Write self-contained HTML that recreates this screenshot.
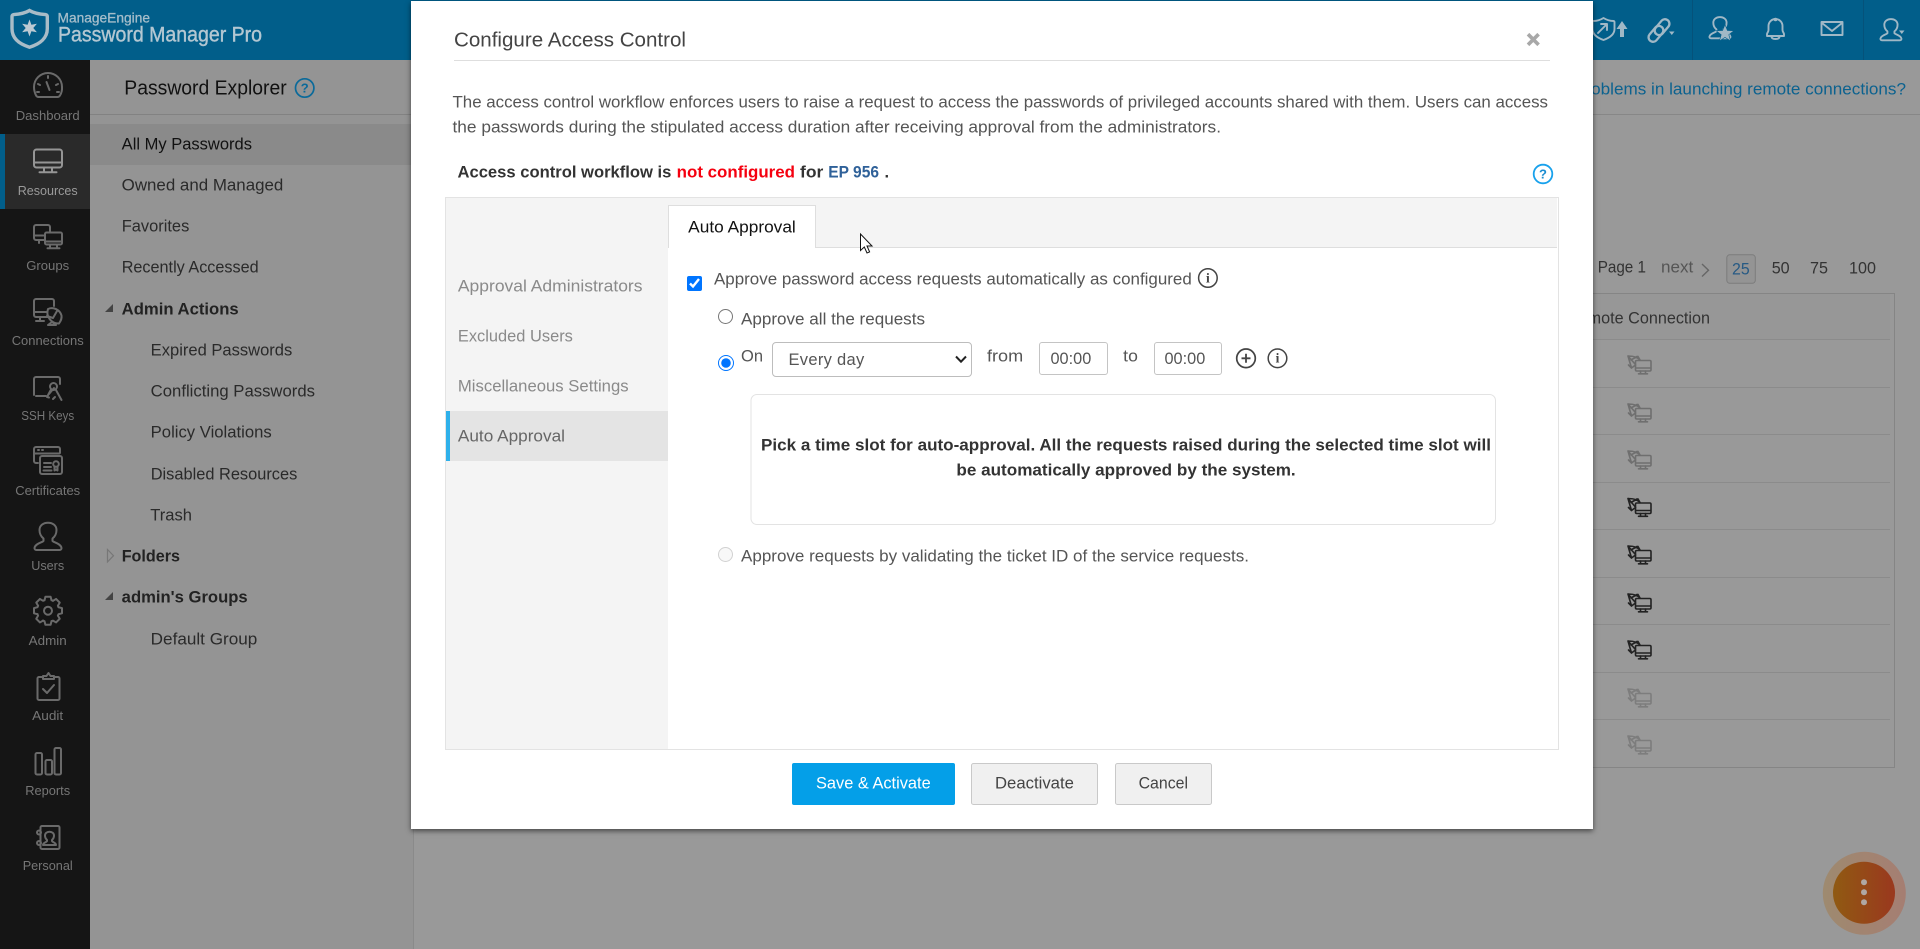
<!DOCTYPE html>
<html lang="en"><head><meta charset="utf-8"><title>Configure Access Control</title>
<style>
html,body{margin:0;padding:0;width:1920px;height:949px;overflow:hidden;background:#999}
*{box-sizing:border-box}
svg{display:block;position:absolute;left:0;top:0}
text{font-family:"Liberation Sans",sans-serif;font-size:16.5px;fill:#333;transform:translateY(-.6px)}
.nav text{font-size:13.2px;fill:#767676;text-anchor:middle;transform:none}
.b{font-weight:700}
.ic{fill:none;stroke:#6a6a6a;stroke-width:2;stroke-linecap:round;stroke-linejoin:round}
.hd{fill:none;stroke:#a0b8c6;stroke-width:1.9;stroke-linecap:round;stroke-linejoin:round}
.mi{fill:none;stroke:#444;stroke-width:1.5}
#modal{position:absolute;left:411px;top:1px;width:1182px;height:828px;background:#fff;box-shadow:0 2px 5px rgba(0,0,0,.55)}
#modal input,#modal select{position:absolute;margin:0;font-family:"Liberation Sans",sans-serif;color:#555}
input[type=text]{height:33px;border:1px solid #c4c4c4;border-radius:3px;background:#fff;font-size:16.3px;outline:0}
select{appearance:none;-webkit-appearance:none;background:transparent;border:1px solid #bdbdbd;border-radius:4px;font-size:16.5px;letter-spacing:.3px;padding:0 0 0 15.5px}
</style></head><body>
<svg width="1920" height="949" viewBox="0 0 1920 949" id="bg">
<defs>
<g id="rc" fill="none" stroke-width="1.6" stroke-linecap="round" stroke-linejoin="round">
<rect x="8.5" y="5.5" width="15.5" height="10.5" rx="1.2"/><path d="M9 13h14.500M13.500 16v2.500M18.500 16v2.500M11.500 18.800h9"/>
<path d="M1 1l3.500 12M1 1.200c4-.3 8 .3 11 3M4.500 13L1.500 10M1 1l7 8M4 5l6-3.500M4.500 13l4-3M13 5l-2-3.500"/>
</g>
<g id="tooth"><path d="M-3.5 -10.5L-2.6 -14H2.6L3.500 -10.5A11 11 0 0 1 4.95 -9.9"/></g>
<path id="usr" d="M43.500 538.500c-2.500-2-4-5-4-8.500 0-4.500 3.800-7.300 8.500-7.300s8.500 2.800 8.500 7.300c0 3.500-1.500 6.500-4 8.500v2.500c0 1 8.500 2.500 9 7 .1 1.200-.7 2-2 2H36.500c-1.300 0-2.100-.8-2-2 .5-4.500 9-6 9-7z"/>
</defs>
<rect width="1920" height="949" fill="#999"/>
<rect width="1920" height="60" fill="#015e8a"/>
<!-- sidebar -->
<rect x="90" y="60" width="323" height="889" fill="#949494"/>
<rect x="413" y="60" width="1" height="889" fill="#8a8a8a"/>
<rect x="90" y="114" width="323" height="1" fill="#828282"/>
<rect x="90" y="124" width="323" height="41" fill="#8a8a8a"/>
<text x="124.3" y="95" style="font-size:20.4px;fill:#111" textLength="162.4" lengthAdjust="spacingAndGlyphs">Password Explorer</text>
<circle cx="304.7" cy="88" r="9.2" fill="none" stroke="#0b6a9a" stroke-width="1.7"/>
<text x="304.7" y="93" text-anchor="middle" class="b" style="font-size:13px;fill:#0b6a9a">?</text>
<text x="121.7" y="150" style="fill:#111" textLength="130.3" lengthAdjust="spacingAndGlyphs">All My Passwords</text>
<text x="121.7" y="191" style="fill:#2a2a2a" textLength="161.6" lengthAdjust="spacingAndGlyphs">Owned and Managed</text>
<text x="121.7" y="232" style="fill:#2a2a2a" textLength="67.6" lengthAdjust="spacingAndGlyphs">Favorites</text>
<text x="121.7" y="273" style="fill:#2a2a2a" textLength="137" lengthAdjust="spacingAndGlyphs">Recently Accessed</text>
<text x="121.7" y="315" class="b" style="fill:#222" textLength="117" lengthAdjust="spacingAndGlyphs">Admin Actions</text>
<text x="150.7" y="356" style="fill:#2a2a2a" textLength="141.6" lengthAdjust="spacingAndGlyphs">Expired Passwords</text>
<text x="150.7" y="397" style="fill:#2a2a2a" textLength="164.3" lengthAdjust="spacingAndGlyphs">Conflicting Passwords</text>
<text x="150.7" y="438" style="fill:#2a2a2a" textLength="121" lengthAdjust="spacingAndGlyphs">Policy Violations</text>
<text x="150.7" y="480" style="fill:#2a2a2a" textLength="146.6" lengthAdjust="spacingAndGlyphs">Disabled Resources</text>
<text x="150.3" y="521" style="fill:#2a2a2a" textLength="41.7" lengthAdjust="spacingAndGlyphs">Trash</text>
<text x="121.7" y="562" class="b" style="fill:#222" textLength="58.3" lengthAdjust="spacingAndGlyphs">Folders</text>
<text x="121.7" y="603" class="b" style="fill:#222" textLength="126" lengthAdjust="spacingAndGlyphs">admin's Groups</text>
<text x="150.7" y="645" style="fill:#2a2a2a" textLength="106.6" lengthAdjust="spacingAndGlyphs">Default Group</text>
<path d="M105 312h8v-8z" fill="#444"/>
<path d="M105 600h8v-8z" fill="#444"/>
<path d="M107.5 549.5l6 6.2-6 6.2z" fill="none" stroke="#777" stroke-width="1.2"/>
<!-- left nav -->
<rect x="0" y="60" width="90" height="889" fill="#151515"/>
<rect x="0" y="134" width="90" height="75" fill="#2a2a2a"/>
<rect x="0" y="134" width="5" height="75" fill="#015e8a"/>
<g class="nav">
<text x="47.7" y="120" textLength="64" lengthAdjust="spacingAndGlyphs">Dashboard</text>
<text x="47.7" y="195" style="fill:#9a9a9a" textLength="60" lengthAdjust="spacingAndGlyphs">Resources</text>
<text x="47.7" y="270" textLength="43" lengthAdjust="spacingAndGlyphs">Groups</text>
<text x="47.7" y="345" textLength="72" lengthAdjust="spacingAndGlyphs">Connections</text>
<text x="47.7" y="420" textLength="53" lengthAdjust="spacingAndGlyphs">SSH Keys</text>
<text x="47.7" y="495" textLength="65" lengthAdjust="spacingAndGlyphs">Certificates</text>
<text x="47.7" y="570" textLength="33" lengthAdjust="spacingAndGlyphs">Users</text>
<text x="47.7" y="645" textLength="38" lengthAdjust="spacingAndGlyphs">Admin</text>
<text x="47.7" y="720" textLength="31" lengthAdjust="spacingAndGlyphs">Audit</text>
<text x="47.7" y="795" textLength="45" lengthAdjust="spacingAndGlyphs">Reports</text>
<text x="47.7" y="870" textLength="50" lengthAdjust="spacingAndGlyphs">Personal</text>
</g>
<!-- dashboard -->
<g class="ic"><path d="M38.500 97h19a3 3 0 0 0 2.400-1.400A14 14 0 0 0 62 87a14 14 0 0 0-28 0c0 3 .8 6 2.100 8.600A3 3 0 0 0 38.500 97z"/><path d="M46.500 82l3 8M48 76v2M38 84l2 1M58 84l-2 1M37 92h2M57 92h2"/></g>
<!-- resources -->
<g class="ic" style="stroke:#959595"><rect x="34" y="149.500" width="28" height="18" rx="2.500"/><path d="M34.500 162.500h27M44 167.500v4M52 167.500v4M39.500 172.300h17"/></g>
<!-- groups -->
<g class="ic"><path d="M44 240h-8a2 2 0 0 1-2-2v-11a2 2 0 0 1 2-2h12a2 2 0 0 1 2 2v5M34.500 235.500h9M39 240v3"/><rect x="45" y="232.500" width="17" height="12" rx="1.500"/><path d="M50 244.500v3.500M57 244.500v3.500M47.500 248.300h12M45.500 241.500h16"/></g>
<!-- connections -->
<g class="ic"><path d="M48 317h-12a2 2 0 0 1-2-2v-14a2 2 0 0 1 2-2h16a2 2 0 0 1 2 2v5M34.500 312h13M40 317v4M36 321h8"/><path d="M48 309a11 11 0 0 0 11 14.500c2-3 3-5 2.500-8a10 10 0 0 0-13.500-6.500zM47 316l6 2 4-7M48 325l4-3 4 3h-8"/></g>
<!-- ssh -->
<g class="ic"><path d="M34 395v-16a2 2 0 0 1 2-2h22a2 2 0 0 1 2 2v5M36 396h10"/><circle cx="53.500" cy="386.500" r="3.500"/><path d="M51 389.500l-4 7.500 2 .5M56 390l5.500 10M49 394l5-6M55 397l-2 2"/></g>
<!-- certificates -->
<g class="ic"><path d="M38 463h-2a2 2 0 0 1-2-2v-12a2 2 0 0 1 2-2h22a2 2 0 0 1 2 2v4M34.500 453.500h25M38 450h1M42 450h1"/><rect x="40" y="456" width="22" height="18" rx="2"/><path d="M44 463h7M44 467h7M43.500 470.500h8"/><circle cx="56" cy="464" r="2.800"/><path d="M54.500 467v3.500l1.500-1 1.500 1V467"/></g>
<!-- users -->
<use href="#usr" class="ic"/>
<!-- admin -->
<g class="ic" transform="translate(48 610.700)"><circle r="4"/><use href="#tooth"/><use href="#tooth" transform="rotate(45)"/><use href="#tooth" transform="rotate(90)"/><use href="#tooth" transform="rotate(135)"/><use href="#tooth" transform="rotate(180)"/><use href="#tooth" transform="rotate(225)"/><use href="#tooth" transform="rotate(270)"/><use href="#tooth" transform="rotate(315)"/></g>
<!-- audit -->
<g class="ic"><path d="M43 677h-4a1.500 1.500 0 0 0-1.500 1.500v20a1.500 1.500 0 0 0 1.500 1.500h19a1.500 1.500 0 0 0 1.500-1.500v-20a1.500 1.500 0 0 0-1.500-1.500h-4M43 679v-3h3.500l2-3 2 3H54v3zM43 689l4 4 7-8"/></g>
<!-- reports -->
<g class="ic"><rect x="35.500" y="753" width="6.500" height="21.500" rx="1.500"/><rect x="45.500" y="760" width="6.500" height="14.500" rx="1.500"/><rect x="54.500" y="748" width="6.500" height="26.500" rx="1.500"/></g>
<!-- personal -->
<g class="ic"><path d="M42 826h16a1.500 1.500 0 0 1 1.500 1.500v20a1.500 1.500 0 0 1-1.500 1.500H42a1.500 1.500 0 0 1-1.500-1.500v-20A1.500 1.500 0 0 1 42 826z"/><circle cx="39" cy="832.500" r="2"/><circle cx="39" cy="843" r="2"/><path d="M47 840c-1-1-2-3-2-4.500 0-2.300 2-3.800 4.500-3.800s4.500 1.500 4.500 3.800c0 1.500-1 3.500-2 4.500v1c0 1 4 1.500 4 4h-13c0-2.500 4-3 4-4z"/></g>
<!-- logo -->
<path d="M29.500 10.500c4 2.400 9.500 3.600 16 4.100 1 .1 1.800.8 1.800 1.800v12.400c0 9-7 15.200-17.800 18.400C18.700 43.900 12 37.800 12 28.800V16.400c0-1 .8-1.700 1.800-1.800 6.500-.5 11.700-1.700 15.700-4.100z" fill="none" stroke="#a9bcc7" stroke-width="3.400"/>
<path d="M29.500 19.500l1.900 5.300 5.500-1-3.600 4.200 3.600 4.200-5.500-1-1.900 5.300-1.900-5.300-5.500 1 3.600-4.200-3.600-4.200 5.500 1z" fill="#bccad3"/>
<text x="57.500" y="23.300" style="font-size:14px;fill:#a5bdca;stroke:#a5bdca;stroke-width:.3px" textLength="92.500" lengthAdjust="spacingAndGlyphs">ManageEngine</text>
<text x="58" y="42" style="font-size:21px;fill:#b3c7d2;stroke:#b3c7d2;stroke-width:.4px" textLength="204" lengthAdjust="spacingAndGlyphs">Password Manager Pro</text>
<!-- header right -->
<rect x="1692" y="0" width="1" height="60" fill="#05527a"/>
<rect x="1863" y="0" width="1" height="60" fill="#05527a"/>
<g class="hd">
<path d="M1603.500 18c4 2.500 7 3 10 3 .5 0 1 .5 1 1v7c0 5-4 8.500-11 11-7-2.500-11-6-11-11v-7c0-.5.500-1 1-1 3 0 6-.5 10-3zM1598 33l9-9M1601 24h6v6"/>
<rect x="-4.500" y="-10.500" width="9" height="18" rx="4.500" transform="translate(1655 35) rotate(40)" style="stroke-width:2.300"/>
<rect x="-4.500" y="-7.500" width="9" height="18" rx="4.500" transform="translate(1663 26) rotate(40)" style="stroke-width:2.300"/>
<use href="#usr" transform="translate(1682.500 -390.700) scale(.78)" style="stroke-width:2.400"/>
<path d="M1767 36v-2c0-1 1.500-2 1.500-4v-4a7 7 0 0 1 14 0v4c0 2 1.500 3 1.500 4v2zM1771.500 36.500c0 2 2 2.500 4 2.500s4-.5 4-2.500"/><circle cx="1775.500" cy="19.500" r=".8"/>
<rect x="1821.500" y="22" width="21" height="13"/><path d="M1822 23l10 8 10-8"/>
<use href="#usr" transform="translate(1853.500 -388.700) scale(.78)" style="stroke-width:2.400"/>
</g>
<path d="M1725 24.500l2.400 6 6.500.2-5.100 4 1.800 6.300-5.600-3.600-5.600 3.600 1.800-6.300-5.100-4 6.500-.2z" fill="#a0b8c6" stroke="#015e8a" stroke-width=".6"/>
<path d="M1622 21l5.500 8h-3.500v8h-4v-8h-3.500z" fill="#a0b8c6"/>
<path d="M1669 31.500h5.500l-2.700 3.500zM1899 30.500h5.500l-2.700 3.500z" fill="#a0b8c6"/>
<!-- content -->
<rect x="1593" y="114" width="327" height="1" fill="#878787"/>
<text x="1574" y="95" style="fill:#0c628f" textLength="332" lengthAdjust="spacingAndGlyphs">Problems in launching remote connections?</text>
<text x="1597.700" y="273" style="fill:#333" textLength="48.300" lengthAdjust="spacingAndGlyphs">Page 1</text>
<text x="1661" y="273" style="fill:#555" textLength="32.300" lengthAdjust="spacingAndGlyphs">next</text>
<path d="M1702 264l6.500 6.200-6.500 6.300" fill="none" stroke="#666" stroke-width="1.400"/>
<rect x="1726.800" y="254.800" width="28.500" height="28.500" rx="3" fill="#949494" stroke="#7c7c7c"/>
<text x="1732" y="275.300" style="fill:#275a84" textLength="17.700" lengthAdjust="spacingAndGlyphs">25</text>
<text x="1771.700" y="274.300" style="fill:#333" textLength="18" lengthAdjust="spacingAndGlyphs">50</text>
<text x="1810" y="274.300" style="fill:#333" textLength="18" lengthAdjust="spacingAndGlyphs">75</text>
<text x="1849" y="274.300" style="fill:#333" textLength="27" lengthAdjust="spacingAndGlyphs">100</text>
<rect x="1500" y="293" width="390" height="47" fill="#979797"/>
<path d="M1500 293.500h394.500V767.500H1500" fill="none" stroke="#858585"/>
<path d="M1500 339.500h390M1500 387.500h390M1500 434.500h390M1500 482.500h390M1500 529.500h390M1500 577.500h390M1500 624.500h390M1500 672.500h390M1500 719.500h390" stroke="#8b8b8b" fill="none"/>
<text x="1567" y="324.300" style="fill:#333" textLength="143" lengthAdjust="spacingAndGlyphs">Remote Connection</text>
<use href="#rc" x="1627" y="355" stroke="#6f6f6f"/>
<use href="#rc" x="1627" y="403" stroke="#6f6f6f"/>
<use href="#rc" x="1627" y="450" stroke="#6f6f6f"/>
<use href="#rc" x="1627" y="497.500" stroke="#222"/>
<use href="#rc" x="1627" y="545" stroke="#222"/>
<use href="#rc" x="1627" y="593" stroke="#222"/>
<use href="#rc" x="1627" y="640" stroke="#222"/>
<use href="#rc" x="1627" y="688" stroke="#7d7d7d"/>
<use href="#rc" x="1627" y="735" stroke="#7d7d7d"/>
<!-- fab -->
<defs>
<linearGradient id="f1"><stop offset="0" stop-color="#905a12"/><stop offset="1" stop-color="#9a381e"/></linearGradient>
<linearGradient id="f2"><stop offset="0" stop-color="#9e8a70"/><stop offset="1" stop-color="#a57e72"/></linearGradient>
</defs>
<circle cx="1864.300" cy="893.300" r="41.500" fill="url(#f2)"/>
<circle cx="1864" cy="892.700" r="31" fill="url(#f1)"/>
<circle cx="1864" cy="882.300" r="3" fill="#b0a8a4"/><circle cx="1864" cy="892.300" r="3" fill="#b0a8a4"/><circle cx="1864" cy="902.300" r="3" fill="#b0a8a4"/>
</svg>

<div id="modal">
<svg width="1182" height="828" viewBox="411 1 1182 828">
<text x="454" y="47.300" style="font-size:20.500px;fill:#444" textLength="232" lengthAdjust="spacingAndGlyphs">Configure Access Control</text>
<rect x="454" y="60" width="1096" height="1" fill="#dedede"/>
<path d="M1528 34.200l10.600 10.600M1538.600 34.200l-10.600 10.600" stroke="#a8a8a8" stroke-width="3.600" fill="none"/>
<text x="452.500" y="108.300" style="fill:#555" textLength="1095.500" lengthAdjust="spacingAndGlyphs">The access control workflow enforces users to raise a request to access the passwords of privileged accounts shared with them. Users can access</text>
<text x="452.500" y="133.300" style="fill:#555" textLength="768.500" lengthAdjust="spacingAndGlyphs">the passwords during the stipulated access duration after receiving approval from the administrators.</text>
<text x="457.500" y="178.300" class="b" style="fill:#333" textLength="213.900" lengthAdjust="spacingAndGlyphs">Access control workflow is</text>
<text x="676.700" y="178.300" class="b" style="fill:#f5000f" textLength="118.300" lengthAdjust="spacingAndGlyphs">not configured</text>
<text x="800" y="178.300" class="b" style="fill:#333" textLength="23.300" lengthAdjust="spacingAndGlyphs">for</text>
<text x="828.300" y="178.300" class="b" style="fill:#2f6199;font-size:17px" textLength="50.700" lengthAdjust="spacingAndGlyphs">EP 956</text>
<text x="884.500" y="178.300" class="b" style="fill:#333">.</text>
<circle cx="1543" cy="174" r="9.300" fill="none" stroke="#18a1ec" stroke-width="1.800"/>
<text x="1543" y="179" text-anchor="middle" class="b" style="font-size:13px;fill:#1a8cd0">?</text>
<!-- tab box -->
<rect x="445.500" y="197.500" width="1113" height="552" fill="#fff" stroke="#e3e3e3"/>
<rect x="446" y="198" width="222" height="551" fill="#f4f4f4"/>
<rect x="668" y="198" width="889" height="49" fill="#f4f4f4"/>
<rect x="668" y="247" width="889" height="1" fill="#dedede"/>
<path d="M668.500 248V205.500H815.500V248" fill="#fff" stroke="#dedede"/>
<rect x="669" y="247" width="146" height="1.500" fill="#fff"/>
<text x="688.200" y="233.300" style="fill:#111" textLength="107.600" lengthAdjust="spacingAndGlyphs">Auto Approval</text>
<text x="457.900" y="292.300" style="fill:#8a8a8a" textLength="184.600" lengthAdjust="spacingAndGlyphs">Approval Administrators</text>
<text x="457.900" y="342.300" style="fill:#8a8a8a" textLength="115" lengthAdjust="spacingAndGlyphs">Excluded Users</text>
<text x="457.900" y="392.300" style="fill:#8a8a8a" textLength="170.700" lengthAdjust="spacingAndGlyphs">Miscellaneous Settings</text>
<rect x="446" y="411" width="222" height="50" fill="#e4e4e4"/>
<rect x="446" y="411" width="4" height="50" fill="#2eb0ea"/>
<text x="457.900" y="442.300" style="fill:#666" textLength="107.100" lengthAdjust="spacingAndGlyphs">Auto Approval</text>
<text x="714" y="285" style="fill:#555" textLength="477.800" lengthAdjust="spacingAndGlyphs">Approve password access requests automatically as configured</text>
<circle cx="1207.900" cy="278" r="9.300" class="mi"/>
<text x="1207.900" y="283" text-anchor="middle" class="b" style="font-family:'Liberation Serif',serif;font-size:13.500px;fill:#444">i</text>
<text x="741" y="325" style="fill:#555" textLength="184" lengthAdjust="spacingAndGlyphs">Approve all the requests</text>
<text x="741" y="362.300" style="fill:#555" textLength="22" lengthAdjust="spacingAndGlyphs">On</text>
<text x="987" y="362.300" style="fill:#555" textLength="36.200" lengthAdjust="spacingAndGlyphs">from</text>
<text x="1123.200" y="362.300" style="fill:#555" textLength="14.700" lengthAdjust="spacingAndGlyphs">to</text>
<path d="M956 356.500l5 5.200 5-5.200" fill="none" stroke="#222" stroke-width="2"/>
<circle cx="1246" cy="358.300" r="9.300" fill="none" stroke="#444" stroke-width="1.700"/>
<path d="M1241.500 358.300h9M1246 353.800v9" stroke="#444" stroke-width="1.800"/>
<circle cx="1277.500" cy="358.300" r="9.300" class="mi"/>
<text x="1277.500" y="363.300" text-anchor="middle" class="b" style="font-family:'Liberation Serif',serif;font-size:13.500px;fill:#444">i</text>
<rect x="751" y="394.500" width="744.500" height="130" rx="6" fill="#fff" stroke="#e3e3e3"/>
<text x="761" y="451.300" class="b" style="fill:#333" textLength="730" lengthAdjust="spacingAndGlyphs">Pick a time slot for auto-approval. All the requests raised during the selected time slot will</text>
<text x="956.400" y="476.300" class="b" style="fill:#333" textLength="339.300" lengthAdjust="spacingAndGlyphs">be automatically approved by the system.</text>
<text x="741" y="562" style="fill:#555" textLength="508" lengthAdjust="spacingAndGlyphs">Approve requests by validating the ticket ID of the service requests.</text>
<!-- buttons -->
<rect x="792" y="763" width="163" height="42" rx="2" fill="#049fe8"/>
<text x="816" y="789.300" style="fill:#fff" textLength="114.700" lengthAdjust="spacingAndGlyphs">Save &amp; Activate</text>
<rect x="971.500" y="763.500" width="126" height="41" rx="2" fill="#f0f0f0" stroke="#c9c9c9"/>
<text x="995" y="789.300" style="fill:#444" textLength="78.900" lengthAdjust="spacingAndGlyphs">Deactivate</text>
<rect x="1115.500" y="763.500" width="96" height="41" rx="2" fill="#f0f0f0" stroke="#c9c9c9"/>
<text x="1138.600" y="789.300" style="fill:#444" textLength="49.400" lengthAdjust="spacingAndGlyphs">Cancel</text>
<!-- cursor -->
<path d="M860.500 234v16.500l3.800-3.500 2.700 6 2.600-1.100-2.600-5.900h5z" fill="#fff" stroke="#111" stroke-width="1"/>
</svg>
<input type="checkbox" checked style="left:276px;top:275px;width:15px;height:15px">
<input type="radio" name="r" style="left:306.500px;top:308px;width:15px;height:15px">
<input type="radio" name="r" checked style="left:307px;top:354px;width:16px;height:16px">
<input type="radio" name="r2" disabled style="left:306.500px;top:546px;width:15px;height:15px">
<select style="left:361px;top:341px;width:200px;height:35px"><option>Every day</option></select>
<input type="text" value="00:00" style="left:628px;top:341px;width:69px;padding:2px 0 0 10.500px">
<input type="text" value="00:00" style="left:743px;top:341px;width:68px;padding:2px 0 0 9.500px">
</div>
</body></html>
